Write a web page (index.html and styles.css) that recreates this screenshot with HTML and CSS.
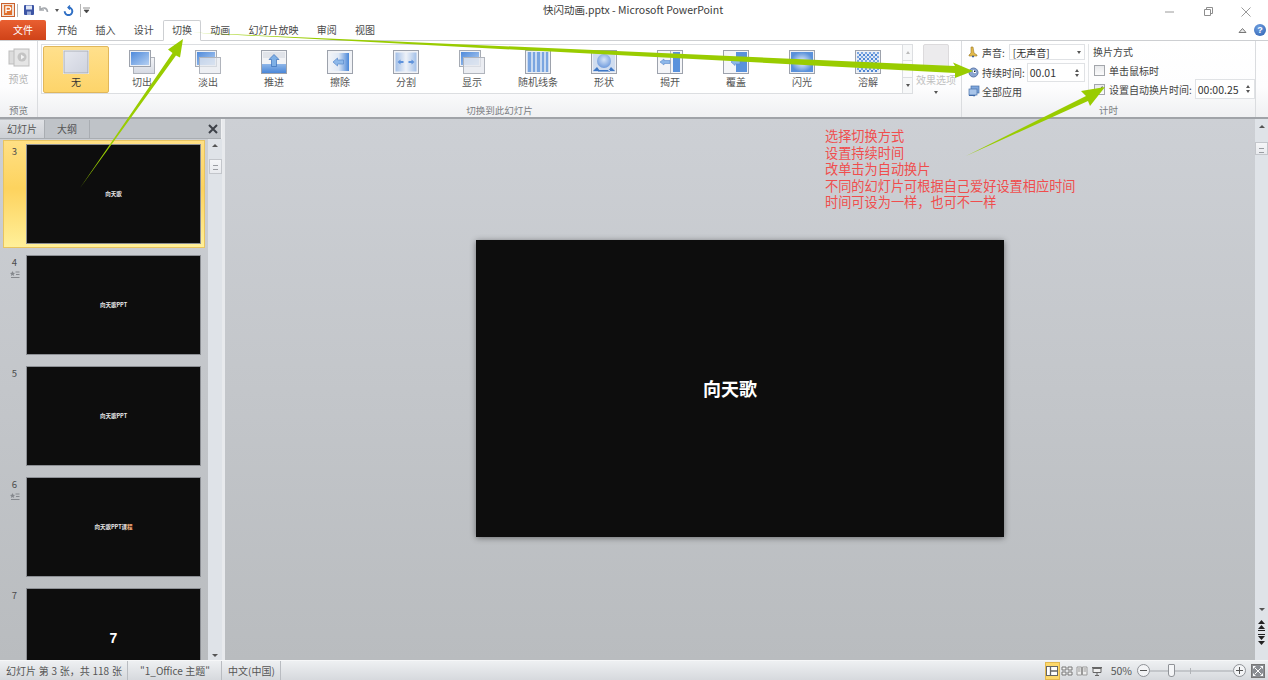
FILE: index.html
```html
<!DOCTYPE html>
<html lang="zh-CN">
<head>
<meta charset="utf-8">
<title>快闪动画.pptx - Microsoft PowerPoint</title>
<link rel="stylesheet" href="styles.css">
</head>
<body>
<svg class="defs" width="0" height="0" aria-hidden="true">
  <defs>
    <linearGradient id="blue" x1="0" y1="0" x2="1" y2="1"><stop offset="0" stop-color="#4f8adb"/><stop offset="1" stop-color="#b5d0f2"/></linearGradient>
    <linearGradient id="blueV" x1="0" y1="0" x2="0" y2="1"><stop offset="0" stop-color="#8fb6e8"/><stop offset="1" stop-color="#4a87d8"/></linearGradient>
    <linearGradient id="blueH" x1="0" y1="0" x2="1" y2="0"><stop offset="0" stop-color="#f0f3f8"/><stop offset=".45" stop-color="#dfe8f5"/><stop offset="1" stop-color="#4a87d8"/></linearGradient>
    <linearGradient id="split" x1="0" y1="0" x2="1" y2="0"><stop offset="0" stop-color="#a3c0e8"/><stop offset=".5" stop-color="#eef2f8"/><stop offset="1" stop-color="#a3c0e8"/></linearGradient>
    <linearGradient id="pale" x1="0" y1="0" x2="0" y2="1"><stop offset="0" stop-color="#f4f5f8"/><stop offset="1" stop-color="#d5d9e2"/></linearGradient>
    <linearGradient id="none" x1="0" y1="0" x2="1" y2="1"><stop offset="0" stop-color="#e6e8f0"/><stop offset="1" stop-color="#ced2dd"/></linearGradient>
    <radialGradient id="ball" cx=".5" cy=".4" r=".6"><stop offset="0" stop-color="#d6e4f7"/><stop offset="1" stop-color="#6f9bdd"/></radialGradient>
  </defs>
</svg>
<div class="app">
  <header class="titlebar">
    <div class="qat">
      <svg class="qat-logo" width="14" height="14" viewBox="0 0 14 14"><rect x=".5" y=".5" width="13" height="13" fill="#f0e2d8" stroke="#c9602e"/><rect x="3" y="2" width="8" height="10" fill="#e0702e"/><path d="M5 10V4h3a1.600 1.600 0 0 1 0 3.400H5" fill="none" stroke="#fff" stroke-width="1.300"/></svg>
      <span class="qat-sep"></span>
      <svg width="12" height="12" viewBox="0 0 12 12"><rect x="1" y="1" width="10" height="10" rx="1" fill="#3c55a5"/><rect x="3" y="1.500" width="6" height="4" fill="#dfe6f5"/><rect x="4" y="7.500" width="4" height="3.500" fill="#9cadd8"/></svg>
      <svg class="qat-undo" width="12" height="12" viewBox="0 0 12 12"><path d="M2 2v4h4M2.500 5.500C5 3 9 3.500 9.500 8" fill="none" stroke="#a5a9ae" stroke-width="1.600"/></svg>
      <span class="caret qat-caret"></span>
      <svg class="qat-redo" width="12" height="12" viewBox="0 0 12 12"><path d="M8 1.500 6 3.500l2 2" fill="none" stroke="#2f6fc4" stroke-width="1.300"/><path d="M6.500 3.500a3.800 3.800 0 1 1-3.800 3.800" fill="none" stroke="#2f6fc4" stroke-width="2"/></svg>
      <span class="qat-sep qat-sep-b"></span>
      <svg class="qat-more" width="7" height="7" viewBox="0 0 7 7"><path d="M0 1h7M1 3h5l-2.500 3z" fill="#444" stroke="#444" stroke-width=".6"/></svg>
    </div>
    <div class="title">快闪动画.pptx - Microsoft PowerPoint</div>
    <div class="winctl">
      <svg width="12" height="12" viewBox="0 0 12 12"><path d="M1 6h9" stroke="#9a9a9a"/></svg>
      <svg width="12" height="12" viewBox="0 0 12 12"><path d="M2.500 3.500h6v6h-6zM4.500 3.500v-2h6v6h-2" fill="none" stroke="#8e8e8e"/></svg>
      <svg width="12" height="12" viewBox="0 0 12 12"><path d="M1.500 1.500l9 9M10.500 1.500l-9 9" stroke="#9a9a9a"/></svg>
    </div>
  </header>

  <nav class="tabs">
    <div class="tab-file">文件</div>
    <div class="tab">开始</div>
    <div class="tab">插入</div>
    <div class="tab">设计</div>
    <div class="tab tab-on">切换</div>
    <div class="tab">动画</div>
    <div class="tab">幻灯片放映</div>
    <div class="tab">审阅</div>
    <div class="tab">视图</div>
    <div class="tab-help">
      <svg width="9" height="7" viewBox="0 0 9 7"><path d="M1 5.500 4.500 1.500 8 5.500z" fill="#e8e8e8" stroke="#777"/></svg>
      <span class="help">?</span>
    </div>
  </nav>

  <section class="ribbon">
    <div class="group group-preview">
      <div class="group-body preview">
        <svg width="22" height="20" viewBox="0 0 22 20"><rect x="1" y="3" width="13" height="13" fill="#dcdcdc" stroke="#bdbdbd"/><rect x="6" y="1" width="15" height="17" fill="#e5e5e5" stroke="#bdbdbd"/><circle cx="14" cy="9" r="4.500" fill="#c4c4c4"/><path d="M13 6.500 16.500 9 13 11.500z" fill="#f3f3f3"/></svg>
        <span>预览</span>
      </div>
      <div class="group-label">预览</div>
    </div>

    <div class="group group-trans">
      <div class="group-body trans-body">
        <div class="gallery">
          <div class="gal-item gal-on">
            <svg class="gi" viewBox="0 0 26 24"><rect x=".5" y=".5" width="25" height="23" fill="url(#none)" stroke="#f5f5f5"/><rect x="1" y="1" width="24" height="22" fill="none" stroke="#8b8f96" stroke-opacity=".6"/></svg>
            <span>无</span>
          </div>
          <div class="gal-item">
            <svg class="gi" viewBox="0 0 26 24"><rect x="4.500" y="7.500" width="21" height="16" fill="url(#pale)" stroke="#aeb2ba"/><rect x=".5" y=".5" width="21" height="16" fill="#eef1f6" stroke="#9da2ac"/><rect x="2" y="2" width="18" height="13" fill="url(#blue)"/></svg>
            <span>切出</span>
          </div>
          <div class="gal-item">
            <svg class="gi" viewBox="0 0 26 24"><rect x=".5" y=".5" width="21" height="16" fill="#eef1f6" stroke="#a6abb4"/><rect x="2" y="2" width="18" height="13" fill="url(#blue)"/><rect x="4.500" y="7.500" width="21" height="16" fill="#e6e9ef" fill-opacity=".72" stroke="#b0b4bc"/></svg>
            <span>淡出</span>
          </div>
          <div class="gal-item">
            <svg class="gi" viewBox="0 0 26 24"><rect x=".5" y=".5" width="25" height="23" fill="#f2f3f6" stroke="#9da2ac"/><rect x="2" y="2" width="22" height="6" fill="#e0e3e9"/><rect x="1" y="14" width="24" height="9" fill="url(#blueV)"/><path d="M13 4.500l5 5h-2.500v7h-5v-7H8z" fill="#7fb0e6" stroke="#3a6fb8" stroke-width=".7"/></svg>
            <span>推进</span>
          </div>
          <div class="gal-item">
            <svg class="gi" viewBox="0 0 26 24"><rect x=".5" y=".5" width="25" height="23" fill="#f0f2f6" stroke="#9da2ac"/><rect x="3" y="3" width="19" height="18" fill="url(#blueH)"/><path d="M6 12l4.500-4V10h6v4h-6v2z" fill="#8db8ea" stroke="#5a8acb" stroke-width=".7"/></svg>
            <span>擦除</span>
          </div>
          <div class="gal-item">
            <svg class="gi" viewBox="0 0 26 24"><rect x=".5" y=".5" width="25" height="23" fill="#f0f2f6" stroke="#9da2ac"/><rect x="2.500" y="2.500" width="21" height="19" fill="url(#split)"/><path d="M4.500 12l3-2.500v1.500h3v2h-3v1.500zM21.500 12l-3-2.500v1.500h-3v2h3v1.500z" fill="#5f93dc"/></svg>
            <span>分割</span>
          </div>
          <div class="gal-item">
            <svg class="gi" viewBox="0 0 26 24"><rect x=".5" y=".5" width="21" height="16" fill="#eef1f6" stroke="#a6abb4"/><rect x="2" y="2" width="18" height="13" fill="url(#blue)"/><rect x="4.500" y="7.500" width="21" height="16" fill="#e6e9ef" fill-opacity=".8" stroke="#b0b4bc"/></svg>
            <span>显示</span>
          </div>
          <div class="gal-item">
            <svg class="gi" viewBox="0 0 26 24"><rect x=".5" y=".5" width="25" height="23" fill="#eef0f5" stroke="#9da2ac"/><rect x="2" y="2" width="22" height="20" fill="#c9daf1"/><path d="M3 2h3v20H3zM8 2h2v20H8zM12 2h3v20h-3zM17 2h2v20h-2zM21 2h2v20h-2z" fill="#7aa5e0"/></svg>
            <span>随机线条</span>
          </div>
          <div class="gal-item">
            <svg class="gi" viewBox="0 0 26 24"><rect x=".5" y=".5" width="25" height="23" fill="#eef0f5" stroke="#9da2ac"/><rect x="2" y="2" width="22" height="20" fill="#cfdcef"/><circle cx="13" cy="11" r="7" fill="url(#ball)"/><path d="M2 21l4-4 3 4zM24 21l-4-4-3 4zM7 20h12v1.500H7z" fill="#3f78c6"/></svg>
            <span>形状</span>
          </div>
          <div class="gal-item">
            <svg class="gi" viewBox="0 0 26 24"><rect x=".5" y=".5" width="25" height="23" fill="#f4f5f8" stroke="#9da2ac"/><rect x="16" y="2" width="7" height="20" fill="#5a92dc"/><rect x="13" y="1" width="1" height="22" fill="#b4b8c0"/><path d="M3 12l4-3v1.500h6v3H7V15z" fill="#8db8ea" stroke="#5a8acb" stroke-width=".6"/></svg>
            <span>揭开</span>
          </div>
          <div class="gal-item">
            <svg class="gi" viewBox="0 0 26 24"><rect x=".5" y=".5" width="25" height="23" fill="#f4f5f8" stroke="#9da2ac"/><rect x="13" y="2" width="11" height="20" fill="#5a92dc"/><path d="M8 12l4-3.500V10h5v4h-5v1.500z" fill="#8db8ea" stroke="#5a8acb" stroke-width=".6"/></svg>
            <span>覆盖</span>
          </div>
          <div class="gal-item">
            <svg class="gi" viewBox="0 0 26 24"><defs><radialGradient id="flash"><stop offset="0" stop-color="#eef4fc"/><stop offset="1" stop-color="#5a91da"/></radialGradient></defs><rect x=".5" y=".5" width="25" height="23" fill="#eef0f5" stroke="#9da2ac"/><rect x="2" y="2" width="22" height="20" fill="url(#flash)"/></svg>
            <span>闪光</span>
          </div>
          <div class="gal-item">
            <svg class="gi" viewBox="0 0 26 24"><defs><pattern id="dis" width="4" height="4" patternUnits="userSpaceOnUse"><rect width="4" height="4" fill="#dfe8f5"/><rect width="2" height="2" fill="#4f86d4"/><rect x="2" y="2" width="2" height="2" fill="#7ba6e2"/></pattern></defs><rect x=".5" y=".5" width="25" height="23" fill="#f0f2f6" stroke="#9da2ac"/><rect x="2" y="2" width="22" height="20" fill="url(#dis)"/></svg>
            <span>溶解</span>
          </div>
        </div>
        <div class="gal-scroll">
          <div class="gs-btn gs-up"><span class="up-tri"></span></div>
          <div class="gs-btn gs-mid"></div>
          <div class="gs-btn gs-more"><span class="caret"></span></div>
        </div>
        <div class="effects">
          <span class="fx-box"></span>
          <span class="fx-label">效果选项</span>
          <span class="caret fx-caret"></span>
        </div>
      </div>
      <div class="group-label">切换到此幻灯片</div>
    </div>

    <div class="group group-timing">
      <div class="group-body timing-body">
        <div class="t-left">
          <div class="t-row t-sound">
            <svg width="11" height="12" viewBox="0 0 11 12"><path d="M3 1h2l1 6 3 2v1H1V9l2-2z" fill="#e2b94a" stroke="#9c7a28" stroke-width=".6"/><path d="M4 10.500h2" stroke="#3f5f9c" stroke-width="1.400"/></svg>
            <span class="t-name">声音:</span>
            <div class="field field-sound"><span>[无声音]</span><span class="caret"></span></div>
          </div>
          <div class="t-row t-dur">
            <svg width="11" height="11" viewBox="0 0 11 11"><circle cx="5.500" cy="5.500" r="4.500" fill="#8ba5d0" stroke="#5c78ab"/><path d="M5.500 3v2.500H8" stroke="#fff"/></svg>
            <span class="t-name">持续时间:</span>
            <div class="field field-dur"><span>00.01</span><span class="spin"><i class="up-tri"></i><i class="caret"></i></span></div>
          </div>
          <div class="t-row t-apply">
            <svg width="12" height="12" viewBox="0 0 12 12"><rect x="3" y="1" width="8" height="7" fill="#7ea6dc" stroke="#476fa8" stroke-width=".7"/><rect x="1" y="4" width="8" height="6" fill="#a9c5ea" stroke="#476fa8" stroke-width=".7"/><path d="M1 10.500h6l-1 1" stroke="#3f6aa8" fill="none"/></svg>
            <span>全部应用</span>
          </div>
        </div>
        <div class="t-right">
          <div class="t-head">换片方式</div>
          <div class="t-check t-check-a"><span class="check"></span><span>单击鼠标时</span></div>
          <div class="t-check"><span class="check"><svg width="9" height="9" viewBox="0 0 9 9"><path d="M1.500 5 3.500 7.500 7.500 1.500" fill="none" stroke="#555" stroke-width="1.200"/></svg></span><span class="t-auto">设置自动换片时间:</span><div class="field field-auto"><span>00:00.25</span><span class="spin"><i class="up-tri"></i><i class="caret"></i></span></div></div>
        </div>
      </div>
      <div class="group-label">计时</div>
    </div>
  </section>

  <main class="work">
    <aside class="panel">
      <div class="panel-tabs">
        <div class="ptab ptab-on">幻灯片</div>
        <div class="ptab">大纲</div>
        <svg class="panel-x" width="10" height="10" viewBox="0 0 10 10"><path d="M1 1l8 8M9 1l-8 8" stroke="#3d4148" stroke-width="2"/></svg>
      </div>
      <div class="panel-body">
        <div class="slides">
          <div class="s-row s-on">
            <div class="s-num">3</div>
            <div class="thumb"><span>向天歌</span></div>
          </div>
          <div class="s-row">
            <div class="s-num">4<svg class="star" width="10" height="8" viewBox="0 0 10 8"><path d="M2.500 0l.8 1.800 1.700.2-1.300 1.200.4 1.800-1.600-1-1.600 1 .4-1.800L0 2l1.700-.2z" fill="#85888d"/><path d="M5.500 1h4M6 3.500h3.500M1 6.500h8.500" stroke="#85888d"/></svg></div>
            <div class="thumb"><span>向天歌PPT</span></div>
          </div>
          <div class="s-row">
            <div class="s-num">5</div>
            <div class="thumb"><span>向天歌PPT</span></div>
          </div>
          <div class="s-row">
            <div class="s-num">6<svg class="star" width="10" height="8" viewBox="0 0 10 8"><path d="M2.500 0l.8 1.800 1.700.2-1.300 1.200.4 1.800-1.600-1-1.600 1 .4-1.800L0 2l1.700-.2z" fill="#85888d"/><path d="M5.500 1h4M6 3.500h3.500M1 6.500h8.500" stroke="#85888d"/></svg></div>
            <div class="thumb thumb-six"><span>向天歌PPT课<b>程</b></span></div>
          </div>
          <div class="s-row">
            <div class="s-num">7</div>
            <div class="thumb thumb-seven"><span>7</span></div>
          </div>
        </div>
        <div class="vscroll vscroll-left">
          <span class="up-tri"></span>
          <span class="v-thumb"></span>
          <span class="v-fill"></span>
          <span class="caret"></span>
        </div>
      </div>
    </aside>
    <div class="canvas">
      <div class="slide">向天歌</div>
    </div>
    <div class="vscroll vscroll-main">
      <span class="up-tri"></span>
      <span class="v-thumb"></span>
      <span class="v-fill"></span>
      <span class="caret"></span>
      <svg class="v-page" width="9" height="11" viewBox="0 0 9 11"><path d="M4.500 0 8 4H1zM4.500 5 8 9H1z" fill="#222"/><path d="M1 10.500h7" stroke="#222"/></svg>
      <svg class="v-page" width="9" height="11" viewBox="0 0 9 11"><path d="M1 .5h7" stroke="#222"/><path d="M4.500 11 8 7H1zM4.500 6 8 2H1z" fill="#222"/></svg>
    </div>
  </main>

  <footer class="status">
    <div class="st-cell st-a">幻灯片 第 3 张，共 118 张</div>
    <div class="st-cell st-b">"1_Office 主题"</div>
    <div class="st-cell st-c">中文(中国)</div>
    <div class="st-right">
      <span class="view view-on"><svg width="12" height="10" viewBox="0 0 12 10"><rect x=".5" y=".5" width="11" height="9" fill="#fff" stroke="#666"/><path d="M4.500 0v10M4.500 5H12" stroke="#666" stroke-width="1.300"/></svg></span>
      <span class="view"><svg width="12" height="10" viewBox="0 0 12 10"><path d="M1 1h4v3H1zM7 1h4v3H7zM1 6h4v3H1zM7 6h4v3H7z" fill="#f4f4f4" stroke="#777"/></svg></span>
      <span class="view"><svg width="12" height="10" viewBox="0 0 12 10"><path d="M1 1h4.500v8H1zM6.500 1H11v8H6.500z" fill="#eee" stroke="#999"/><path d="M2 3h2.500M2 5h2.500M7.500 3H10M7.500 5H10" stroke="#999"/></svg></span>
      <span class="view"><svg width="12" height="10" viewBox="0 0 12 10"><path d="M1 1h10v1.500H1z" fill="#666"/><path d="M2 2.500h8v4H2zM6 6.500v3M4 9.500h4" fill="#eee" stroke="#666"/></svg></span>
      <span class="zoom-val">50%</span>
      <span class="zoom-btn"><i class="zminus"></i></span>
      <span class="slider"><i class="slider-tick"></i><i class="slider-thumb"></i></span>
      <span class="zoom-btn"><i class="zminus"></i><i class="zplus"></i></span>
      <svg class="fit" width="14" height="14" viewBox="0 0 14 14"><rect x=".5" y=".5" width="13" height="13" fill="#8a8d92" stroke="#777"/><path d="M2 2h3L2 5zM12 2v3L9 2zM2 12V9l3 3zM12 12H9l3-3z" fill="#fff"/><path d="M4 4l6 6M10 4l-6 6" stroke="#fff"/></svg>
    </div>
  </footer>

  <div class="note">
    <p>选择切换方式</p>
    <p>设置持续时间</p>
    <p>改单击为自动换片</p>
    <p>不同的幻灯片可根据自己爱好设置相应时间</p>
    <p>时间可设为一样，也可不一样</p>
  </div>

  <svg class="arrows" width="1268" height="680" viewBox="0 0 1268 680">
    <polygon points="80,188 172.500,53 168,49.500 183,39 180,57.500 176,55.500" fill="#99cc00"/>
    <polygon points="192,32.500 955,66 953,62.500 973,71 955,78 955,73" fill="#99cc00"/>
    <polygon points="966,156 1086,96 1081,91 1105,87 1090,106 1088,101" fill="#99cc00"/>
  </svg>
</div>
</body>
</html>
```

FILE: styles.css
```css
* { box-sizing: border-box; }
html, body { margin: 0; padding: 0; }
body {
  width: 1268px;
  height: 680px;
  overflow: hidden;
  font-family: "Noto Sans CJK SC", "Liberation Sans", sans-serif;
  font-size: 10px;
  color: #444;
  background: #fff;
}
.defs { position: absolute; }
.app {
  position: relative;
  width: 1268px;
  height: 680px;
  display: flex;
  flex-direction: column;
  overflow: hidden;
}

/* title bar */
.titlebar {
  height: 20px;
  flex: none;
  display: flex;
  align-items: center;
  justify-content: space-between;
  position: relative;
  background: #fff;
}
.qat { display: flex; align-items: center; padding-left: 1px; width: 200px; }
.qat-sep { width: 1px; height: 13px; background: #b5b5b5; margin: 0 5px 0 2px; }
.qat-undo { margin-left: 3px; }
.qat-caret { margin: 0 3px 0 5px; border-top-color: #aaa; }
.qat-redo { margin-left: 0; }
.qat-sep-b { margin: 0 2px 0 6px; }
.title {
  position: absolute;
  left: 543px;
  top: 2px;
  font-family: "Noto Sans CJK SC", "Open Sans", sans-serif;
  font-size: 10.500px;
  line-height: 16px;
  color: #3c3c3c;
  white-space: nowrap;
}
.winctl { display: flex; gap: 26px; padding-right: 16px; margin-top: 4px; }

/* tabs */
.tabs {
  height: 21px;
  flex: none;
  display: flex;
  align-items: stretch;
  border-bottom: 1px solid #cdcfd2;
  background: #fff;
}
.tab-file {
  width: 46px;
  margin-right: 2px;
  background: linear-gradient(#e95f31, #cf4218);
  color: #fff;
  text-align: center;
  line-height: 20px;
  border-radius: 2px 2px 0 0;
}
.tab {
  padding: 0 9.150px;
  line-height: 19px;
  color: #4a4a4a;
}
.tab-on {
  background: #fff;
  border: 1px solid #cdcfd2;
  border-bottom: 1px solid #fff;
  border-radius: 2px 2px 0 0;
  padding: 0 8.150px;
  height: 21px;
  line-height: 18px;
}
.tab-help {
  margin-left: auto;
  display: flex;
  align-items: center;
  gap: 7px;
  padding-right: 2px;
}
.help {
  width: 12px;
  height: 12px;
  border-radius: 50%;
  background: radial-gradient(circle at 40% 30%, #6f9fe0, #2c5fb0);
  color: #fff;
  font: bold 9px/12px "Liberation Sans", sans-serif;
  text-align: center;
}

/* ribbon */
.ribbon {
  height: 78px;
  flex: none;
  display: flex;
  background: linear-gradient(#ffffff 0%, #fdfdfe 60%, #eff0f2 100%);
  border-bottom: 2px solid #a0a3a8;
}
.group {
  display: flex;
  flex-direction: column;
  border-right: 1px solid #dadcdf;
}
.group-body { height: 62px; flex: none; }
.group-label {
  text-align: center;
  color: #7a7d82;
  font-size: 9.500px;
  line-height: 14px;
}
.group-preview { width: 38px; }
.preview {
  display: flex;
  flex-direction: column;
  align-items: center;
  padding-top: 7px;
  color: #b3b3b3;
  gap: 4px;
  line-height: 14px;
}
.group-trans { width: 924px; }
.trans-body { display: flex; padding: 3px 0 0 3px; }
.gallery {
  width: 861px;
  height: 50px;
  display: flex;
  padding: 1px;
  background: #fff;
  border: 1px solid #dcdee1;
  border-right: none;
}
.gal-item {
  width: 66px;
  height: 47px;
  flex: none;
  display: flex;
  flex-direction: column;
  align-items: center;
  padding-top: 4px;
  color: #555;
  line-height: 14px;
  gap: 1px;
}
.gal-on {
  background: linear-gradient(#ffe08c, #fdd46a);
  border: 1px solid #e1b75a;
  border-radius: 2px;
  padding-top: 3px;
  color: #333;
}
.gi { width: 26px; height: 24px; flex: none; }
.gal-scroll { width: 11px; height: 50px; display: flex; flex-direction: column; }
.gs-btn {
  flex: 1;
  display: flex;
  align-items: center;
  justify-content: center;
  border: 1px solid #dcdee1;
  margin-top: -1px;
  background: #f7f8f9;
}
.gs-up { margin-top: 0; }
.gs-mid { background: #fbfbfc; }
.effects {
  width: 46px;
  display: flex;
  flex-direction: column;
  align-items: center;
  color: #c0c0c0;
  line-height: 13px;
}
.fx-box {
  width: 26px;
  height: 25px;
  background: #ecebed;
  border: 1px solid #dcdadc;
  border-radius: 2px;
  margin-bottom: 4px;
}
.fx-label { white-space: nowrap; }
.fx-caret { margin-top: 5px; border-top-color: #c8c8c8; }

.group-timing { width: 294px; }
.timing-body { display: flex; padding-top: 3px; }
.t-left { width: 127px; padding-left: 6px; border-right: 1px solid #e3e5e7; height: 49px; }
.t-row { display: flex; align-items: center; gap: 3px; }
.t-name { white-space: nowrap; }
.t-sound { height: 16px; }
.t-dur { height: 19px; margin-top: 3px; }
.t-apply { margin-top: 0; height: 18px; gap: 2px; }
.t-right { padding-left: 4px; }
.t-head { line-height: 16px; margin-top: 0; }
.t-check { display: flex; align-items: center; gap: 4px; }
.t-check-a { height: 17px; margin-top: 2px; }
.check {
  width: 11px;
  height: 11px;
  flex: none;
  background: linear-gradient(#e8e9eb, #fbfbfc);
  border: 1px solid #a3a6ab;
  margin-left: 1px;
  display: flex;
  align-items: center;
  justify-content: center;
}
.t-auto { white-space: nowrap; margin-right: -1px; }
.field {
  background: #fff;
  border: 1px solid #e0e2e5;
  display: flex;
  align-items: center;
  justify-content: space-between;
  padding: 0 3px;
  color: #333;
  font-family: "Noto Sans CJK SC", sans-serif;
}
.field-sound { width: 76px; height: 16px; margin-left: 1px; }
.field-dur { width: 58px; height: 19px; font-size: 10.500px; padding: 0 3px 0 2px; margin-left: -1px; }
.field-auto { width: 60px; height: 20px; font-size: 10.500px; padding: 0 2px; flex: none; }
.spin { display: flex; flex-direction: column; gap: 2px; padding-right: 2px; }
.spin i { display: block; }

.caret {
  display: inline-block;
  width: 0;
  height: 0;
  border-left: 2.500px solid transparent;
  border-right: 2.500px solid transparent;
  border-top: 3px solid #555;
}
.up-tri {
  display: inline-block;
  width: 0;
  height: 0;
  border-left: 2.500px solid transparent;
  border-right: 2.500px solid transparent;
  border-bottom: 3px solid #555;
}
.gs-up .up-tri { border-bottom-color: #bbb; }
.vscroll > .caret { border-left-width: 3.500px; border-right-width: 3.500px; border-top-width: 3.500px; }
.vscroll > .up-tri { border-left-width: 3.500px; border-right-width: 3.500px; border-bottom-width: 3.500px; }

/* work */
.work {
  flex: 1;
  min-height: 0;
  display: flex;
  background: linear-gradient(#cdd0d5, #b9bcbf);
}
.panel {
  width: 222px;
  flex: none;
  display: flex;
  flex-direction: column;
  border-right: 1px solid #f0f1f3;
  margin-right: 3px;
  box-shadow: 3px 0 0 #e8eaed;
}
.panel-tabs {
  height: 20px;
  flex: none;
  display: flex;
  align-items: stretch;
  position: relative;
  background: #bfc3c8;
  border-bottom: 1px solid #a9adb2;
  padding-top: 1px;
}
.ptab {
  width: 45px;
  text-align: center;
  line-height: 18px;
  border-right: 1px solid #a9adb2;
  color: #555;
}
.ptab-on { background: linear-gradient(#dfe1e5, #cdd0d5); }
.panel-x { position: absolute; right: 3px; top: 5px; }
.panel-body { flex: 1; min-height: 0; display: flex; }
.slides {
  width: 208px;
  flex: none;
  overflow: hidden;
  padding: 1px 0 0 3px;
  display: flex;
  flex-direction: column;
  gap: 3px;
}
.s-row {
  width: 202px;
  height: 108px;
  flex: none;
  display: flex;
  padding: 4px 4px 0 0;
}
.s-on {
  background: linear-gradient(#ffe085, #fdd35e 45%, #fff09a);
  box-shadow: 0 0 0 1px #e8c460 inset;
}
.s-num {
  width: 23px;
  flex: none;
  text-align: center;
  color: #4c4c4c;
  font-size: 9.500px;
  line-height: 14px;
  display: flex;
  flex-direction: column;
  align-items: center;
}
.star { margin-top: 2px; }
.thumb {
  width: 175px;
  height: 100px;
  background: #0d0d0d;
  border: 1px solid #8c8f94;
  display: flex;
  align-items: center;
  justify-content: center;
  color: #e8e8e8;
  font-size: 5.500px;
  font-weight: 700;
}
.thumb-six b { color: #e8a070; }
.thumb-seven { color: #fff; font: bold 14px "Liberation Sans", sans-serif; padding-bottom: 1px; }
.vscroll {
  flex: none;
  display: flex;
  flex-direction: column;
  align-items: center;
  background: #dfe3e8;
}
.vscroll-left { width: 14px; padding: 5px 0 0; height: 100%; }
.vscroll-main { width: 13px; padding-top: 6px; }
.v-thumb {
  width: 13px;
  height: 15px;
  margin-top: 12px;
  background: linear-gradient(#f5f6f8, #e8eaee);
  border: 1px solid #c3c6cb;
  position: relative;
  flex: none;
}
.v-thumb::after {
  content: "";
  position: absolute;
  left: 3px;
  right: 3px;
  top: 5px;
  height: 3px;
  border-top: 1px solid #9a9da2;
  border-bottom: 1px solid #9a9da2;
}
.vscroll-main .v-thumb { height: 13px; margin-top: 14px; }
.v-fill { flex: 1; }
.vscroll-left .caret { margin-bottom: 3px; }
.vscroll-main .caret { margin-bottom: 9px; }
.v-page { margin-bottom: 3px; }
.vscroll-main .v-page:last-child { margin-bottom: 15px; }
.canvas {
  flex: 1;
  min-width: 0;
  display: flex;
  align-items: center;
  justify-content: center;
  padding-bottom: 3px;
}
.slide {
  width: 528px;
  height: 297px;
  background: #0d0d0d;
  box-shadow: 0 1px 6px rgba(0, 0, 0, .45);
  color: #fff;
  font-size: 18px;
  font-weight: 700;
  display: flex;
  align-items: center;
  justify-content: center;
  padding: 0 20px 0 0;
}

/* status */
.status {
  height: 20px;
  flex: none;
  display: flex;
  align-items: center;
  background: linear-gradient(#eef0f2, #d6d9dd);
  border-top: 1px solid #f6f7f8;
  color: #555;
}
.st-cell { height: 20px; line-height: 19px; border-right: 1px solid #b9bcc1; white-space: nowrap; }
.st-a { width: 128px; padding-left: 6px; word-spacing: .5px; }
.st-b { width: 94px; padding-left: 12px; }
.st-c { width: 59px; padding-left: 6px; }
.st-right {
  margin-left: auto;
  display: flex;
  align-items: center;
  height: 20px;
  padding-right: 3px;
}
.view { width: 15px; height: 18px; display: flex; align-items: center; justify-content: center; }
.view-on { background: #fdd86a; border: 1px solid #e3b84f; margin-right: 0; }
.zoom-val { font-size: 10.500px; margin: 0 5px 0 6px; color: #555; }
.zoom-btn {
  width: 13px;
  height: 13px;
  border-radius: 50%;
  border: 1px solid #8f9297;
  background: #f3f4f6;
  position: relative;
  flex: none;
}
.zminus { position: absolute; left: 2px; right: 2px; top: 5px; height: 1px; background: #555; }
.zplus { position: absolute; top: 2px; bottom: 2px; left: 5px; width: 1px; background: #555; }
.slider { width: 83px; height: 14px; position: relative; flex: none; }
.slider::before { content: ""; position: absolute; left: 0; right: 0; top: 6px; height: 2px; background: #c3c6ca; }
.slider-tick { position: absolute; left: 40px; top: 4px; height: 6px; width: 1px; background: #b0b3b7; }
.slider-thumb {
  position: absolute;
  left: 18px;
  top: 0;
  width: 7px;
  height: 13px;
  background: #f4f5f7;
  border: 1px solid #8f9297;
  border-radius: 1px 1px 3px 3px;
}
.fit { margin-left: 5px; }

/* overlays */
.note {
  position: absolute;
  left: 825px;
  top: 128px;
  color: #f04d4d;
  font-size: 13.200px;
  line-height: 16.500px;
  white-space: nowrap;
}
.note p { margin: 0; }
.arrows { position: absolute; left: 0; top: 0; pointer-events: none; }
```
